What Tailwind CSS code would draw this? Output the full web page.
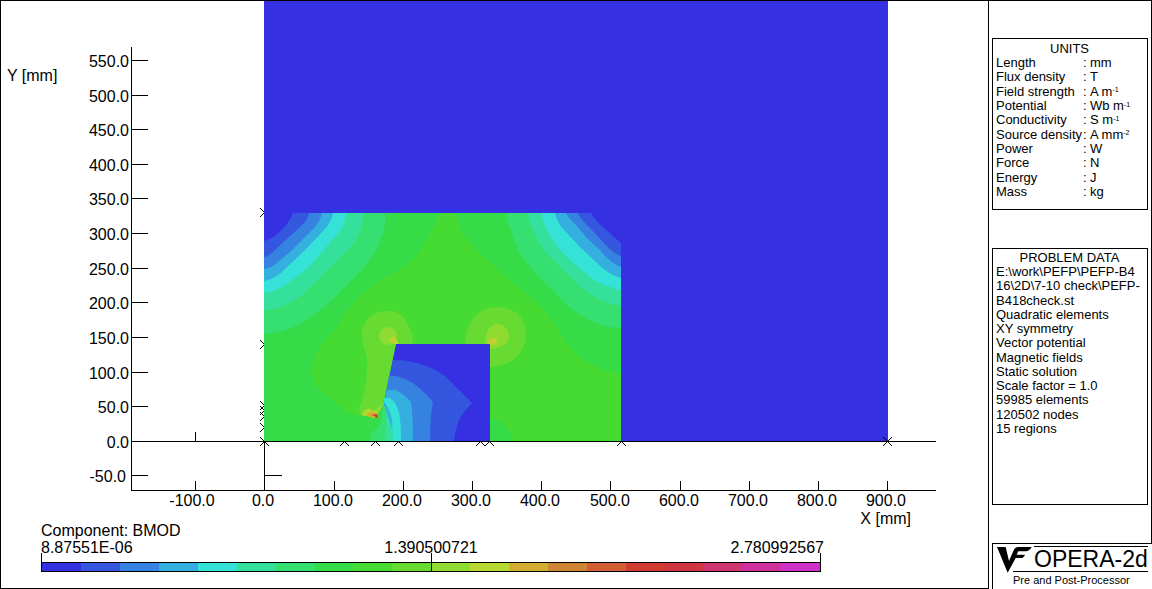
<!DOCTYPE html>
<html lang="en">
<head>
<meta charset="utf-8">
<meta name="viewport" content="width=device-width, initial-scale=1">
<title>OPERA-2d Pre and Post-Processor</title>
<script src="https://cdn.jsdelivr.net/npm/@tailwindcss/browser@4"></script>
</head>
<body class="bg-white text-black font-['Liberation_Sans',Arial,sans-serif]">
<main class="flex min-h-screen">
  <section class="min-w-0 flex-1 border border-black">
    <svg class="block w-full" viewBox="1 1 987 521" role="img" aria-label="BMOD contour plot" font-size="16">
      <!-- region point markers -->
      <g stroke="#000" fill="none">
        <path d="M260 208l9 9m0-9l-9 9M260 340l9 9m0-9l-9 9M260 401l9 9m0-9l-9 9M260 406l9 9m0-9l-9 9M260 412l9 9m0-9l-9 9M260 423l9 9m0-9l-9 9M260 437l9 9m0-9l-9 9"/>
        <path d="M340 437l9 9m0-9l-9 9M371 437l9 9m0-9l-9 9M394 437l9 9m0-9l-9 9M476 437l9 9m0-9l-9 9M485 437l9 9m0-9l-9 9M617 437l9 9m0-9l-9 9"/>
      </g>
      <path d="M131 441.500H936" stroke="#000"/>
      <!-- air -->
      <path fill="#3531e3" d="M264 0H888V441H264z"/>
      <!-- yoke -->
      <path fill="#35dc48" d="M264 213H621V441H264z"/>
      <path fill="#45db32" d="M439 213Q438 220 432 230Q424 248 412 260Q402 270 388 276Q374 284 365 292Q354 301 348 310L338 326Q325 340 318 350Q312 360 312 370Q311 377 315 383Q318 389 325 395L342 408Q347 414 355 415L375 418L383 402L396 344H490V418Q502 420 507 428Q512 434 512 441H621V373Q606 372 597 367Q588 363 580 357Q570 348 563 337Q558 328 553 322Q544 308 530 297L507 278L480 253Q468 243 463 233Q458 224 457 213z"/>
      <!-- upper left corner bands -->
      <path fill="#35df70" d="M264 213H385Q386 227 382 237Q375 256 362 270L332 300Q317 314 302 323Q283 333 264 334z"/>
      <path fill="#35e09d" d="M264 213H363V222Q357 243 345 253L315 283Q300 299 285 305Q274 310 264 310z"/>
      <path fill="#35e2d8" d="M264 213H346Q344 227 338 233L317 258Q303 273 288 283Q276 292 264 293z"/>
      <path fill="#35aee0" d="M264 213H333Q331 223 323 231L305 250L286 268Q276 279 264 281z"/>
      <path fill="#3582e0" d="M264 213H322Q320 222 313 229L292 250L278 262Q272 268 264 269z"/>
      <path fill="#3557e0" d="M264 213H309Q308 220 301 226L288 238L276 249Q270 256 264 257z"/>
      <path fill="#3531e3" d="M264 213H293Q290 222 283 228Q276 238 264 241z"/>
      <!-- upper right corner bands -->
      <path fill="#35df70" d="M621 213H507Q506 221 512 233Q516 250 527 263Q538 278 553 290Q564 304 577 313Q593 323 607 327L621 328z"/>
      <path fill="#35e09d" d="M621 213H528Q528 222 533 230Q539 245 550 257L573 280Q586 292 597 298Q608 304 621 306z"/>
      <path fill="#35e2d8" d="M621 213H542Q543 223 547 230Q555 246 567 257L590 277Q600 284 610 287L621 291z"/>
      <path fill="#35aee0" d="M621 213H555Q557 223 565 231L580 247L597 263Q609 275 621 278z"/>
      <path fill="#3582e0" d="M621 213H566Q569 219 577 226L587 238L600 250Q610 263 621 267z"/>
      <path fill="#3557e0" d="M621 213H577Q582 221 590 228L603 242Q612 253 621 256z"/>
      <path fill="#3531e3" d="M621 213H591L595 219L602 226L612 235L616 239L621 243z"/>
      <!-- hot corners -->
      <path fill="#68db32" d="M361 415Q358 410 360 406Q368 385 367 357Q361 340 362 330Q368 311 388 311Q402 311 408 325Q413 333 413 344H396L383 402L375 416z"/>
      <path fill="#68db32" d="M465 344Q468 307 498 307Q526 309 526 337Q521 366 490 367V344z"/>
      <circle cx="388" cy="336" r="9" fill="#90db32"/>
      <path fill="#b8d832" d="M389 341L393 336L398 341V344H394z"/>
      <path fill="#d4c432" d="M392 340l2-2 2 4-1 2z"/>
      <path fill="#90db32" d="M485 344Q486 324 498 324Q509 326 509 337Q507 347 490 349z"/>
      <path fill="#b8d832" d="M488 344L490 339L495 338L498 341L494 344L490 345z"/>
      <path fill="#d4c432" d="M490 342l3-3 2 3-4 3z"/>
      <!-- field entering the coil -->
      <path fill="#35df70" d="M370 441L372 433L378 427Q382 421 383 402H394V441z"/>
      <path fill="#35e09d" d="M385 441L386 420L384 400H394V441z"/>
      <path fill="#3531e3" d="M396 344H490V441H400L384 404z"/>
      <path fill="#3557e0" d="M393 360Q405 360 413 362Q431 366 445 376L455 386L463 394L472 403L465 411L460 418Q455 430 454 441H400L384 404z"/>
      <path fill="#3582e0" d="M389 376Q396 375 402 378Q411 381 418 387L426 394L433 402Q430 415 430 441H400L384 404z"/>
      <path fill="#35aee0" d="M387 390H395Q403 393 411 402Q413 415 413 441H396L384 404z"/>
      <path fill="#35e2d8" d="M384 398H390Q395 401 398 410Q401 417 401 441H393L392 420Q390 409 384 402z"/>
      <!-- peak field at the pole tip -->
      <path fill="#90db32" d="M361 415L364 409L376 410L384 401L380 411L376 416z"/>
      <path fill="#b8d832" d="M361 415L366 412L368 408L371 411L377 412L374 418L367 416z"/>
      <path fill="#d4ae32" d="M366 414L370 412L377 413L378 416L374 418L368 416z"/>
      <path fill="#d03a30" d="M371 415L377 414L378 417L376 418L375 416z"/>
      <!-- axes -->
      <g stroke="#000" fill="none" shape-rendering="crispEdges">
        <path d="M131.500 47V490.500H936M264.500 441V490M264 475.500H282M195.500 432V441M888 441.500H936"/>
        <path d="M131 60.500h17M131 95.500h17M131 129.500h17M131 164.500h17M131 198.500h17M131 233.500h17M131 268.500h17M131 302.500h17M131 337.500h17M131 372.500h17M131 406.500h17M131 475.500h17"/>
        <path d="M195.500 481v9M334.500 481v9M403.500 481v9M472.500 481v9M541.500 481v9M610.500 481v9M680.500 481v9M749.500 481v9M818.500 481v9M887.500 481v9"/>
      </g>
      <path d="M883 446l9-9M883 437l9 9" stroke="#000"/>
      <g text-anchor="end">
        <text x="129" y="67">550.0</text><text x="129" y="102">500.0</text><text x="129" y="136">450.0</text><text x="129" y="171">400.0</text><text x="129" y="205">350.0</text><text x="129" y="240">300.0</text><text x="129" y="275">250.0</text><text x="129" y="309">200.0</text><text x="129" y="344">150.0</text><text x="129" y="379">100.0</text><text x="129" y="413">50.0</text><text x="129" y="448">0.0</text><text x="126" y="482">-50.0</text>
      </g>
      <g text-anchor="middle">
        <text x="192" y="506">-100.0</text><text x="263" y="506">0.0</text><text x="333" y="506">100.0</text><text x="402" y="506">200.0</text><text x="471" y="506">300.0</text><text x="540" y="506">400.0</text><text x="610" y="506">500.0</text><text x="679" y="506">600.0</text><text x="748" y="506">700.0</text><text x="817" y="506">800.0</text><text x="886" y="506">900.0</text>
      </g>
      <text x="7" y="81">Y [mm]</text>
    </svg>
    <div class="ml-10 mr-[167px]">
      <div class="flex justify-between leading-[18px]">
        <p>Component: BMOD</p>
        <p class="-mr-[90px] -mt-3">X [mm]</p>
      </div>
      <div class="grid grid-cols-3 leading-4">
        <span>8.87551E-06</span>
        <span class="text-center">1.390500721</span>
        <span class="-mr-[3px] text-right">2.780992567</span>
      </div>
      <div class="relative mt-[6px] flex h-2.5 border border-black">
        <i class="flex-1 bg-[#3531e3]"></i><i class="flex-1 bg-[#3557e0]"></i><i class="flex-1 bg-[#3582e0]"></i><i class="flex-1 bg-[#35aee0]"></i><i class="flex-1 bg-[#35e2d8]"></i><i class="flex-1 bg-[#35e09d]"></i><i class="flex-1 bg-[#35df70]"></i><i class="flex-1 bg-[#35dc48]"></i><i class="flex-1 bg-[#45db32]"></i><i class="flex-1 bg-[#68db32]"></i><i class="flex-1 bg-[#90db32]"></i><i class="flex-1 bg-[#b8d832]"></i><i class="flex-1 bg-[#d4ae32]"></i><i class="flex-1 bg-[#d08535]"></i><i class="flex-1 bg-[#d06033]"></i><i class="flex-1 bg-[#d03a30]"></i><i class="flex-1 bg-[#d03640]"></i><i class="flex-1 bg-[#d03570]"></i><i class="flex-1 bg-[#cf319d]"></i><i class="flex-1 bg-[#cf30c8]"></i>
        <b class="absolute -left-px -top-2.5 h-2.5 w-px bg-black"></b>
        <b class="absolute -top-2.5 left-1/2 h-[18px] w-px bg-black"></b>
        <b class="absolute -right-px -top-2.5 h-2.5 w-px bg-black"></b>
      </div>
    </div>
  </section>

  <aside class="flex w-[163px] shrink-0 flex-col text-[13px] leading-[14px]">
    <div class="flex-1 border-r border-t border-black pl-[3px] pr-[3px] pt-[37px]">
      <section class="h-[172px] border border-black pl-[3px] pt-[3px]">
        <h2 class="pr-1 text-center">UNITS</h2>
        <table class="h-[143px] whitespace-nowrap">
          <tbody>
            <tr><th scope="row" class="w-[87px] p-0 text-left font-normal">Length</th><td class="w-[7px] p-0">:</td><td class="p-0">mm</td></tr>
            <tr><th scope="row" class="p-0 text-left font-normal">Flux density</th><td class="p-0">:</td><td class="p-0">T</td></tr>
            <tr><th scope="row" class="p-0 text-left font-normal">Field strength</th><td class="p-0">:</td><td class="p-0">A m<sup class="text-[7px]">-1</sup></td></tr>
            <tr><th scope="row" class="p-0 text-left font-normal">Potential</th><td class="p-0">:</td><td class="p-0">Wb m<sup class="text-[7px]">-1</sup></td></tr>
            <tr><th scope="row" class="p-0 text-left font-normal">Conductivity</th><td class="p-0">:</td><td class="p-0">S m<sup class="text-[7px]">-1</sup></td></tr>
            <tr><th scope="row" class="p-0 text-left font-normal">Source density</th><td class="p-0">:</td><td class="p-0">A mm<sup class="text-[7px]">-2</sup></td></tr>
            <tr><th scope="row" class="p-0 text-left font-normal">Power</th><td class="p-0">:</td><td class="p-0">W</td></tr>
            <tr><th scope="row" class="p-0 text-left font-normal">Force</th><td class="p-0">:</td><td class="p-0">N</td></tr>
            <tr><th scope="row" class="p-0 text-left font-normal">Energy</th><td class="p-0">:</td><td class="p-0">J</td></tr>
            <tr><th scope="row" class="p-0 text-left font-normal">Mass</th><td class="p-0">:</td><td class="p-0">kg</td></tr>
          </tbody>
        </table>
      </section>
      <section class="mt-[38px] h-[257px] border border-black pl-[3px] pt-[2px]">
        <h2 class="pr-1 text-center">PROBLEM DATA</h2>
        <ul class="flex h-[171px] flex-col justify-between whitespace-nowrap">
          <li>E:\work\PEFP\PEFP-B4</li>
          <li>16\2D\7-10 check\PEFP-</li>
          <li>B418check.st</li>
          <li>Quadratic elements</li>
          <li>XY symmetry</li>
          <li>Vector potential</li>
          <li>Magnetic fields</li>
          <li>Static solution</li>
          <li>Scale factor = 1.0</li>
          <li>59985 elements</li>
          <li>120502 nodes</li>
          <li>15 regions</li>
        </ul>
      </section>
    </div>
    <div class="ml-[3px] h-[46px] border-l border-t border-black pr-1 pt-[2px]">
      <div class="flex">
        <svg class="h-7 w-[41px] shrink-0" viewBox="24 165 123 84" aria-label="VF">
          <path d="M36 168H62L72 210L86 178Q90 168 100 168H140Q134 180 122 181H100L95 191H120Q116 201 108 201H92L68 245Z"/>
        </svg>
        <p class="h-[25px] flex-1 whitespace-nowrap border-t border-black text-[23px] leading-[25px]">OPERA-2d</p>
      </div>
      <p class="-mt-[3px] ml-5 whitespace-nowrap border-t border-black pt-[2px] text-[11px] leading-[12px]">Pre and Post-Processor</p>
    </div>
  </aside>
</main>
</body>
</html>
